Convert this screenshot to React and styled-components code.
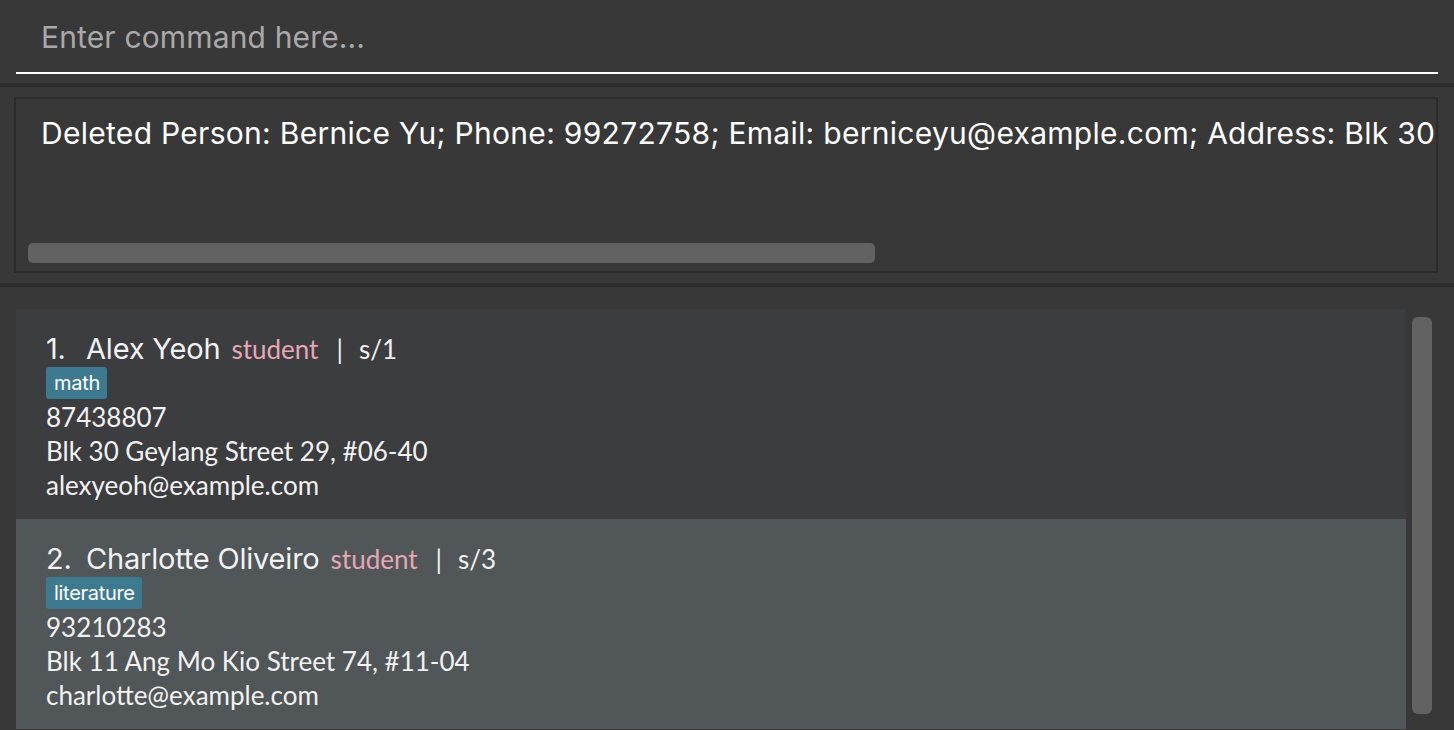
import React from "react";
import styled, { createGlobalStyle } from "styled-components";

const Global = createGlobalStyle`
  html, body { margin: 0; padding: 0; background: #383838; overflow: hidden; }
  #root { height: 730px; }
`;

const Page = styled.div`
  display: flex;
  flex-direction: column;
  height: 730px;
  background: #383838;
`;

const CommandArea = styled.div`
  padding: 0 16px;
  height: 83px;
  box-sizing: border-box;
`;

const CommandField = styled.div`
  height: 74px;
  border-bottom: 2px solid #ffffff;
  display: flex;
  align-items: center;
  padding-left: 25px;
  padding-top: 2px;
  box-sizing: border-box;
  font-family: Inter, "Liberation Sans", sans-serif;
  font-size: 30px;
  letter-spacing: 0.15px;
  color: #a9a9a9;
`;

const Band = styled.div`
  height: 4px;
  background: #2d2d2d;
  flex-shrink: 0;
`;

const ResultArea = styled.div`
  padding: 10px 16px 10px 14px;
`;

const ResultBox = styled.div`
  height: 176px;
  box-sizing: border-box;
  border: 2px solid #2b2b2b;
  display: flex;
  flex-direction: column;
  justify-content: space-between;
  padding: 16px 0 8px 12px;
  overflow: hidden;
`;

const ResultText = styled.div`
  padding-left: 13px;
  white-space: nowrap;
  font-family: Inter, "Liberation Sans", sans-serif;
  font-size: 30px;
  letter-spacing: 0.29px;
  color: #ffffff;
`;

const HScroll = styled.div`
  width: 847px;
  height: 20px;
  border-radius: 5px;
  background: #626262;
`;

const ListArea = styled.div`
  flex: 1;
  display: flex;
  padding: 22px 0 0 16px;
  overflow: hidden;
`;

const List = styled.div`
  width: 1390px;
  display: flex;
  flex-direction: column;
`;

const ScrollTrack = styled.div`
  width: 48px;
  padding: 8px 0 0 6px;
  box-sizing: border-box;
`;

const Thumb = styled.div`
  width: 20px;
  height: 397px;
  border-radius: 6px;
  background: #626262;
`;

const Card = styled.div`
  height: 210px;
  flex-shrink: 0;
  box-sizing: border-box;
  background: ${(p) => (p.$alt ? "#515658" : "#3c3d3f")};
  padding: 22px 0 0 30px;
  font-family: Lato, "Noto Sans", sans-serif;
  color: #f2f2f2;
`;

const NameRow = styled.div`
  display: flex;
  align-items: baseline;
  height: 36px;
  white-space: nowrap;
`;

const Index = styled.span`
  font-family: Inter, "Liberation Sans", sans-serif;
  font-size: 29px;
  letter-spacing: -0.2px;
  width: 40px;
`;

const Name = styled.span`
  font-family: Inter, "Liberation Sans", sans-serif;
  font-size: 29px;
  letter-spacing: -0.2px;
  color: #f2f2f2;
  margin-right: 11px;
`;

const Role = styled.span`
  font-size: 26px;
  color: #e6a7b6;
`;

const Sep = styled.span`
  font-size: 26px;
  margin: 0 16px 0 18px;
`;

const Code = styled.span`
  font-size: 26px;
`;

const Tags = styled.div`
  display: flex;
  gap: 6px;
  height: 32px;
  align-items: flex-start;
`;

const Tag = styled.span`
  background: #3d7a90;
  color: #ffffff;
  border-radius: 3px;
  height: 32px;
  padding: 0 7px 0 8px;
  display: flex;
  align-items: center;
  font-family: Inter, "Liberation Sans", sans-serif;
  font-size: 20px;
  letter-spacing: -0.3px;
`;

const Line = styled.div`
  font-size: 26px;
  height: 34px;
  line-height: 34px;
  white-space: nowrap;
`;

const FirstLine = styled(Line)`
  margin-top: 1px;
`;

const people = [
  {
    name: "Alex Yeoh",
    role: "student",
    code: "s/1",
    tags: ["math"],
    phone: "87438807",
    address: "Blk 30 Geylang Street 29, #06-40",
    email: "alexyeoh@example.com",
  },
  {
    name: "Charlotte Oliveiro",
    role: "student",
    code: "s/3",
    tags: ["literature"],
    phone: "93210283",
    address: "Blk 11 Ang Mo Kio Street 74, #11-04",
    email: "charlotte@example.com",
  },
];

export default function App() {
  return (
    <Page>
      <Global />
      <CommandArea>
        <CommandField>Enter command here...</CommandField>
      </CommandArea>
      <Band />
      <ResultArea>
        <ResultBox>
          <ResultText>
            Deleted Person: Bernice Yu; Phone: 99272758; Email: berniceyu@example.com; Address: Blk 30
          </ResultText>
          <HScroll />
        </ResultBox>
      </ResultArea>
      <Band />
      <ListArea>
        <List>
          {people.map((p, i) => (
            <Card key={p.name} $alt={i % 2 === 1}>
              <NameRow>
                <Index>{i + 1}.</Index>
                <Name>{p.name}</Name>
                <Role>{p.role}</Role>
                <Sep>|</Sep>
                <Code>{p.code}</Code>
              </NameRow>
              <Tags>
                {p.tags.map((t) => (
                  <Tag key={t}>{t}</Tag>
                ))}
              </Tags>
              <FirstLine>{p.phone}</FirstLine>
              <Line>{p.address}</Line>
              <Line>{p.email}</Line>
            </Card>
          ))}
        </List>
        <ScrollTrack>
          <Thumb />
        </ScrollTrack>
      </ListArea>
    </Page>
  );
}
